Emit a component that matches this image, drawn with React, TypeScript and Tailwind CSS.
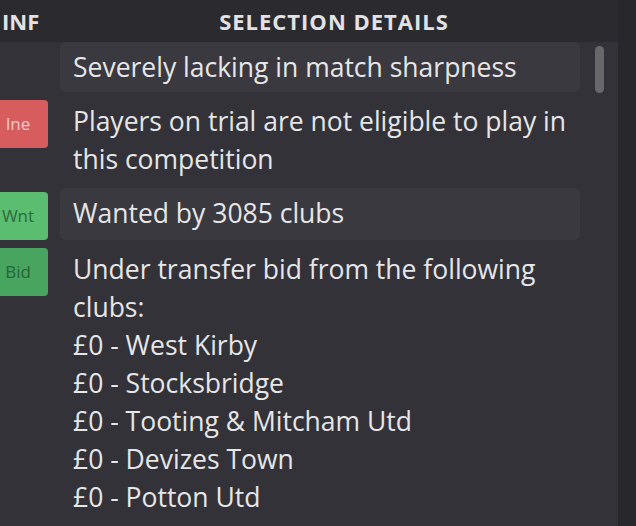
interface Detail {
    badge?: { label: string; bg: string; fg: string };
    lines: string[];
}

const details: Detail[] = [
    { lines: ['Severely lacking in match sharpness'] },
    {
        badge: { label: 'Ine', bg: 'bg-[#d65c5e]', fg: 'text-[#f6c9c9]' },
        lines: ['Players on trial are not eligible to play in', 'this competition'],
    },
    {
        badge: { label: 'Wnt', bg: 'bg-[#5bbd70]', fg: 'text-[#2b6b3c]' },
        lines: ['Wanted by 3085 clubs'],
    },
    {
        badge: { label: 'Bid', bg: 'bg-[#47a55f]', fg: 'text-[#28633a]' },
        lines: [
            'Under transfer bid from the following',
            'clubs:',
            '£0 - West Kirby',
            '£0 - Stocksbridge',
            '£0 - Tooting & Mitcham Utd',
            '£0 - Devizes Town',
            '£0 - Potton Utd',
        ],
    },
];

export default function App() {
    return (
        <div className="flex h-[526px] w-[636px] overflow-hidden bg-[#333238] font-['Open_Sans',sans-serif] text-[#e6e6e8]">
            <div className="flex flex-1 flex-col">
                <div className="flex h-[42px] items-center bg-[#2b2a2f] text-[22px] font-bold uppercase tracking-[1px] text-[#e2e2e4]">
                    <div className="w-[60px] pl-[2px] tracking-normal">INF</div>
                    <div className="flex-1 pr-[10px] text-center">Selection Details</div>
                </div>
                <div className="flex flex-1">
                    <div className="flex w-[580px] flex-col gap-[4px]">
                        {details.map((d, i) => (
                            <div key={i} className="flex">
                                <div className="w-[60px] shrink-0 pt-[4px]">
                                    {d.badge && (
                                        <div className={`-ml-[12px] flex h-[48px] w-[60px] items-center justify-center rounded-[4px] text-[17px] ${d.badge.bg} ${d.badge.fg}`}>
                                            {d.badge.label}
                                        </div>
                                    )}
                                </div>
                                <div className={`flex-1 rounded-[6px] px-[13px] py-[6px] text-[26.5px] leading-[38px] ${i % 2 === 0 ? 'bg-[#3a393f]' : ''}`}>
                                    {d.lines.map((l) => (
                                        <div key={l}>{l}</div>
                                    ))}
                                </div>
                            </div>
                        ))}
                    </div>
                    <div className="flex flex-1 justify-center pt-[4px]">
                        <div className="h-[47px] w-[9px] rounded-full bg-[#68676c]" />
                    </div>
                </div>
            </div>
            <div className="w-[18px] bg-[#28272c]" />
        </div>
    );
}
